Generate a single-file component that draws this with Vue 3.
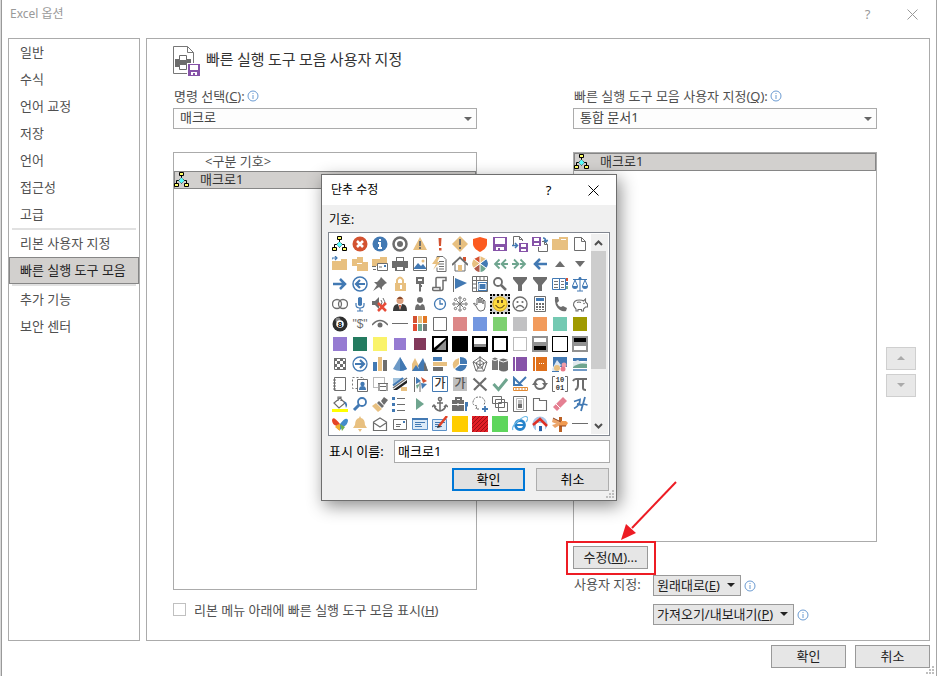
<template>
  <div class="options-window">
    <header class="title-bar">
      <h1>Excel 옵션</h1>
      <div class="title-actions">
        <button type="button" aria-label="도움말">?</button>
        <button type="button" aria-label="닫기">
          <svg width="11" height="11" viewBox="0 0 11 11"><path d="M.5.5l10 10M10.5.5l-10 10" stroke="currentColor" fill="none" /></svg>
        </button>
      </div>
    </header>

    <div class="window-body">
      <nav class="side-nav">
        <template v-for="item in navItems" :key="item.label">
          <hr v-if="item.divider">
          <a href="#" :class="{ active: item.label === activeNav }" @click.prevent="activeNav = item.label">{{ item.label }}</a>
        </template>
      </nav>

      <main class="panel">
        <div class="panel-heading">
          <svg width="28" height="31" viewBox="0 0 28 31" fill="none">
            <path d="M.5.5h14l6 6v21H.5z" fill="#fff" stroke="#777" />
            <path d="M14.500.5v6h6" stroke="#777" />
            <path d="M2 13h16v8H2z" fill="#6b6b6b" />
            <path d="M6.500 9.500h7v5h-7zM6.500 18.500h7v5h-7z" fill="#fff" stroke="#6b6b6b" />
            <path d="M14 17h14v14H14z" fill="#fff" />
            <path d="M15 18h12v12H15z" fill="#8653a8" />
            <path d="M17 19h8v5h-8zM18 26h6v3h-6z" fill="#fff" />
            <path d="M20 27h2v2h-2z" fill="#8653a8" />
          </svg>
          <h2>빠른 실행 도구 모음 사용자 지정</h2>
        </div>

        <div class="columns">
          <section class="column source">
            <div class="field-label">
              <label for="command-source">명령 선택(<u>C</u>):</label>
              <svg class="info" viewBox="0 0 12 12"><circle cx="6" cy="6" r="5" /><path d="M6 5v4M6 3v1" /></svg>
            </div>
            <div class="select-box">
              <select id="command-source"><option>매크로</option></select>
              <svg width="8" height="4" viewBox="0 0 8 4"><path d="M0 0h8L4 4z" fill="#666" /></svg>
            </div>
            <ul class="command-list">
              <li class="separator-item">&lt;구분 기호&gt;</li>
              <li class="selected"><svg viewBox="0 0 16 16" v-html="macroIcon"></svg><span>매크로1</span></li>
            </ul>
            <div class="check-row">
              <input id="below-ribbon" type="checkbox">
              <label for="below-ribbon">리본 메뉴 아래에 빠른 실행 도구 모음 표시(<u>H</u>)</label>
            </div>
          </section>

          <section class="column target">
            <div class="field-label">
              <label for="toolbar-target">빠른 실행 도구 모음 사용자 지정(<u>Q</u>):</label>
              <svg class="info" viewBox="0 0 12 12"><circle cx="6" cy="6" r="5" /><path d="M6 5v4M6 3v1" /></svg>
            </div>
            <div class="select-box">
              <select id="toolbar-target"><option>통합 문서1</option></select>
              <svg width="8" height="4" viewBox="0 0 8 4"><path d="M0 0h8L4 4z" fill="#666" /></svg>
            </div>
            <ul class="command-list">
              <li class="selected"><svg viewBox="0 0 16 16" v-html="macroIcon"></svg><span>매크로1</span></li>
            </ul>
            <div class="modify-row">
              <button type="button" class="btn"><span>수정(<u>M</u>)...</span></button>
              <!-- 강조 화살표 -->
              <svg class="arrow" width="60" height="64" viewBox="0 0 60 64">
                <path d="M56 3L12 49" stroke="#ed1c24" stroke-width="2" />
                <path d="M1 61L6 45l10 9z" fill="#ed1c24" />
              </svg>
            </div>
            <div class="custom-rows">
              <span class="custom-label">사용자 지정:</span>
              <div class="custom-item">
                <button type="button" class="btn drop"><span>원래대로(<u>E</u>)</span><svg viewBox="0 0 8 4"><path d="M0 0h8L4 4z" /></svg></button>
                <svg class="info" viewBox="0 0 12 12"><circle cx="6" cy="6" r="5" /><path d="M6 5v4M6 3v1" /></svg>
              </div>
              <div class="custom-item second">
                <button type="button" class="btn drop"><span>가져오기/내보내기(<u>P</u>)</span><svg viewBox="0 0 8 4"><path d="M0 0h8L4 4z" /></svg></button>
                <svg class="info" viewBox="0 0 12 12"><circle cx="6" cy="6" r="5" /><path d="M6 5v4M6 3v1" /></svg>
              </div>
            </div>
          </section>

          <div class="order-buttons">
            <button type="button" class="btn" disabled aria-label="위로"><svg width="8" height="4" viewBox="0 0 8 4"><path d="M0 4h8L4 0z" fill="#aaa" /></svg></button>
            <button type="button" class="btn" disabled aria-label="아래로"><svg width="8" height="4" viewBox="0 0 8 4"><path d="M0 0h8L4 4z" fill="#aaa" /></svg></button>
          </div>
        </div>
      </main>
    </div>

    <footer class="window-footer">
      <button type="button" class="btn">확인</button>
      <button type="button" class="btn">취소</button>
      <svg class="grip" viewBox="0 0 8 8"><path :d="gripPath" /></svg>
    </footer>

    <!-- 단추 수정 대화 상자 -->
    <div class="dialog" role="dialog" aria-labelledby="dialog-title">
      <header class="dialog-title">
        <h2 id="dialog-title">단추 수정</h2>
        <div class="title-actions">
          <button type="button" aria-label="도움말">?</button>
          <button type="button" aria-label="닫기">
            <svg width="11" height="11" viewBox="0 0 11 11"><path d="M.5.5l10 10M10.5.5l-10 10" stroke="currentColor" fill="none" /></svg>
          </button>
        </div>
      </header>
      <div class="dialog-body">
        <p class="symbol-label">기호:</p>
        <div class="symbol-box">
          <div class="symbol-grid">
            <button
              v-for="(icon, i) in icons"
              :key="i"
              type="button"
              :class="{ chosen: i === chosenIcon }"
              :aria-label="`기호 ${i + 1}`"
              @click="chosenIcon = i"
            >
              <svg width="16" height="16" viewBox="0 0 16 16" fill="none" v-html="icon"></svg>
            </button>
          </div>
          <div class="scrollbar">
            <svg width="15" height="17" viewBox="0 0 15 17"><path d="M4 11l3.500-3.500L11 11" /></svg>
            <div class="track"><div class="thumb"></div></div>
            <svg width="15" height="17" viewBox="0 0 15 17"><path d="M4 7l3.500 3.500L11 7" /></svg>
          </div>
        </div>
        <div class="name-row">
          <label for="display-name">표시 이름:</label>
          <input id="display-name" v-model="displayName" type="text">
        </div>
        <div class="dialog-buttons">
          <button type="button" class="btn primary">확인</button>
          <button type="button" class="btn">취소</button>
        </div>
      </div>
      <svg class="grip" viewBox="0 0 8 8"><path :d="gripPath" /></svg>
    </div>
  </div>
</template>

<script setup>
import { ref } from 'vue'

const navItems = [
  { label: '일반' },
  { label: '수식' },
  { label: '언어 교정' },
  { label: '저장' },
  { label: '언어' },
  { label: '접근성' },
  { label: '고급' },
  { label: '리본 사용자 지정', divider: true },
  { label: '빠른 실행 도구 모음' },
  { label: '추가 기능', divider: true },
  { label: '보안 센터' }
]
const activeNav = ref('빠른 실행 도구 모음')
const displayName = ref('매크로1')
const chosenIcon = ref(47)

const gripPath = 'M6 0h2v2H6zM3 3h2v2H3zM6 3h2v2H6zM0 6h2v2H0zM3 6h2v2H3zM6 6h2v2H6z'

const G = '#6d6d6d'
const B = '#4279b3'
const T = '#e8c080'
const R = '#d35230'
const P = '#8653a8'
const N = '#6fa58f'

// 채우기 / 선 도우미
const f = (d, c = G) => `<path d="${d}" fill="${c}"/>`
const s = (d, c = G, w = 1) => `<path d="${d}" stroke="${c}" stroke-width="${w}"/>`
const c = (x, y, r, color = G) => `<circle cx="${x}" cy="${y}" r="${r}" fill="${color}"/>`
const ring = (x, y, r, color = G, w = 1) => `<circle cx="${x}" cy="${y}" r="${r}" stroke="${color}" stroke-width="${w}"/>`
const t = (x, y, size, text, color = G, weight = 400, family = 'Liberation Sans, Noto Sans CJK KR, sans-serif') =>
  `<text x="${x}" y="${y}" font-family="${family}" font-size="${size}" font-weight="${weight}" fill="${color}" text-anchor="middle">${text}</text>`
const swatch = (color) => f('M1 1h14v14H1z', color)

const macroIcon =
  s('M7.500 4v2M2.500 11V8.500h3M12.500 11V8.500h-3', '#000') +
  '<path d="M7.500 5.500l3 3-3 3-3-3z" fill="#5ff" stroke="#222" stroke-dasharray="1 1"/>' +
  '<path d="M5.500.5h4v3h-4zM.5 11.500h4v3h-4zM10.500 11.500h4v3h-4z" fill="#ffff66" stroke="#000"/>'

const disk = f('M1 1h14v14H1z', P) + f('M3 2h10v6H3zM4 11h8v3H4z', '#fff') + f('M6 12h2v2H6z', P)
const miniDisk = (x, y) =>
  f(`M${x} ${y}h9v9h-9z`, P) + f(`M${x + 2} ${y + 1}h5v3h-5zM${x + 2} ${y + 6}h5v2h-5z`, '#fff')
const funnel = f('M1 1h14v2l-5 6v6H6V9L1 3z')
const cardLines = s('M3 6.500h10M3 8.500h6M3 10.500h7', B)

const icons = [
  // 1
  macroIcon,
  c(8, 8, 7.5, R) + s('M5 5l6 6M11 5l-6 6', '#fff', 2.5),
  c(8, 8, 7.5, B) + f('M7 3h2v2H7zM6 6h3v5h1v2H6v-2h1V8H6z', '#fff'),
  ring(8, 8, 6.5, G, 2.5) + c(8, 8, 3),
  f('M8 1l7 13H1z', T) + f('M7 5h2v5H7zM7 11h2v2H7z', G),
  f('M6.500 2h3L9 10H7zM7 12h2.500v2.500H7z', R),
  f('M8 0l8 8-8 8-8-8z', T) + f('M7 3h2v6H7zM7 11h2v2H7z', G),
  f('M8 1l7 2v5c0 3-3 6-7 8-4-2-7-5-7-8V3z', '#fc5a20'),
  disk,
  s('M1.500 9V.5h6l3 3V5M7.500.5v3h3') + miniDisk(7, 7) + s('M0 9.500h5M3 7l2.500 2.500L3 12', B, 1.5),
  miniDisk(0, 1) + s('M6.500 11v4.500h9v-7l-3-3H10M12.500 5.500v3h3') + s('M11 2q3 0 3 4M12 4l2 2 2-2', B, 1.5),
  f('M0 3h7V1h9v13H0z', T) + s('M9 3.500h5', '#fff'),
  '<path d="M2.500 1.500h7l4 4v9h-11zM9.500 1.500v4h4" fill="#fff" stroke="#6d6d6d"/>',
  // 2
  f('M0 5h9V3h6v11H0z', T) + s('M0 3.500V2h5M3 0l2 2-2 2', B, 1.2),
  f('M0 3h5V1h6v9H0z', T) + s('M5 7.500h10', '#fff') + f('M5 8h5V6h6v9H5z', T),
  f('M0 3h8V1h7v9H0z', T) + '<path d="M5.500 7.500h10v7h-10z" fill="#fff" stroke="#6d6d6d"/>' + s('M0 10.500h4M1 13.500h3M7 11h3') + f('M12 9h2v2h-2z', B),
  f('M4 1h8v4H4zM0 5h16v7h-3v-2H3v2H0zM3 10h10v5H3z') + f('M5 2h6v3H5zM5 11h6v3H5z', '#fff'),
  s('M1.500 1.500h13v13h-13z') + f('M2 12l4-5 3 3 2-2 3 4v1H2z', B) + c(11, 5, 1.5, T),
  s('M5 5.500V.5h6l3 3v12H5v-4M6 8h6M7 10.500h5M7 13h5M7 5.500h5') + f('M5 1L0 8h4L1 14l7-8H5l3-5z', T),
  '<path d="M3 7.500V15h10V7.500" fill="#fff" stroke="#6d6d6d"/>' + f('M11 1h3v4h-3z', R) + s('M0 9l8-7.500L16 9', G, 1.8) + f('M6 9h4v6H6z', T),
  f('M8 0l6 3-6 5z', T) + f('M8 0L2 3l6 5z', R) + f('M8 8L2 3q-4 5 0 9z', T) + f('M8 8l6-5q4 5 0 9z', B) + f('M8 8l6 4q-2 4-6 4z', N) + f('M8 8l-6 4q2 4 6 4z', '#b05a48') + s('M8 0v16M2 3l12 9M14 3L2 12', '#fff'),
  s('M7.500 3.500L3 8l4.500 4.500M14 3.500L9.500 8l4.500 4.500M3 8h5M10 8h6', N, 1.8),
  s('M8.500 3.500L13 8l-4.500 4.500M2 3.500L6.500 8 2 12.500M8 8h5M0 8h6', N, 1.8),
  s('M15 8H3M8 3L3 8l5 5', B, 2.5),
  f('M8 5l5 6H3z'),
  f('M3 5h10l-5 6z'),
  // 3
  s('M1 8h12M8 3l5 5-5 5', B, 2.5),
  ring(8, 8, 7, B, 1.5) + s('M13 8H4M8 4L4 8l4 4', B, 2.2),
  f('M9 1l6 6-2 1-3 3v3L7 11l-6 4 4-6-3-3h3l3-3z'),
  s('M5 7V4q3-5 6 0v3', T, 2) + f('M3 7h11v8H3z', T) + f('M8 9h2v4H8z', '#fff'),
  f('M4 1h8v7H9v1h1v2H9v4l-1 1-1-1V8H4z') + f('M6 3h4v2H6z', '#fff'),
  s('M4 11V2.500q0-1 1-1h9v3h-3v8q0 2-2 2H2q-2 0-1-3h7v3', G, 1.5),
  s('M1.500 0v16', G) + f('M3 2l12 5-12 6z', B),
  s('M.5.500h15v15H.5zM.5 4.500h15M4.500.5v15M8 0v4M12 0v4M0 8h4M0 12h4') + f('M6 6h9v9H6z', B) + s('M7 7.500h7v6H7z', '#fff'),
  ring(6, 6, 4, G, 1.8) + s('M9 9l5 5', G, 2.5),
  funnel,
  funnel,
  s('M.5 2.500h13v11H.5zM7.500 3v11', B) + s('M2 5.500h4M2 8.500h4M2 11.500h4M9 5.500h3M9 8.500h3M9 11.500h3', '#777') + f('M14 2h2v3h-2z', R) + f('M14 6h2v3h-2z', B) + f('M14 10h2v3h-2z', N),
  s('M8 1v14M5 15h6M1 3.500h14M3 4L.5 10M3 4l2.500 6M13 4l-2.500 6M13 4l2.500 6', B) + f('M0 10h6q0 3-3 3t-3-3zM10 10h6q0 3-3 3t-3-3z', B) + c(8, 2.5, 1.5, B),
  // 4
  ring(5, 8, 4.5, G, 1.3) + ring(11, 8, 4.5, G, 1.3),
  f('M6 2q2-2 4 0v7q-2 2-4 0z', B) + s('M4 7v2q0 3 4 3t4-3V7M8 12v3M5 15h6', B, 1.2),
  f('M0 5h3l4-4v12L3 9H0z') + s('M9 4q2 2 0 5M11 2q3 4 1 7') + s('M6 7l8 8M14 7l-8 8', '#e84b37', 2.5),
  f('M1 15q0-7 5-7h4q5 0 5 7z', '#3a3a3a') + f('M6 8h4l-2 6z', '#fff') + f('M7 9h2l-1 5z', R) + c(8, 4.5, 3.5, '#dda17f') + f('M5 3q3-5 6 0z', '#8b4b2c'),
  c(8, 4, 3) + f('M3 14q0-6 3-6l2 2 2-2q3 0 3 6z'),
  ring(8, 8, 5.5, B, 1.3) + s('M8 4v4h3', B, 1.3),
  s('M8 4v8M4 8h8M5 5l6 6M11 5l-6 6') + [[8, 2], [8, 14], [2, 8], [14, 8], [3.5, 3.5], [12.5, 3.5], [3.5, 12.5], [12.5, 12.5]].map(([x, y]) => ring(x, y, 1.2)).join(''),
  s('M4 10L1.500 8q0-2 2 0L5 9V3q1-2 2 0v4-5q1-2 2 0v5-4q1-2 2 0v5-3q1-2 2 0v6q0 4-4 4H8q-2 0-4-5z'),
  c(8, 8, 7.5, '#ffdc3e') + ring(8, 8, 7, '#d3a92a') + f('M5 4h2v3H5zM9 4h2v3H9z', '#6e5520') + s('M3.500 9q4.500 6 9 0', '#6e5520', 1.2),
  ring(8, 8, 7, G, 1.3) + c(5.5, 6, 1.1) + c(10.5, 6, 1.1) + s('M4 12q4-5 8 0', G, 1.3),
  s('M2.500.5h11v15h-11z') + f('M4 2h8v3H4z', B) + f('M4 7h2v2H4zM7 7h2v2H7zM10 7h2v2h-2zM4 10h2v2H4zM7 10h2v2H7zM10 10h2v2h-2zM4 13h2v1H4zM7 13h2v1H7zM10 13h2v1h-2z'),
  f('M3 1h3l1 4-2 2q1 3 4 4l2-1 4 2-1 3q-3 1-6-1Q2 10 3 1z'),
  s('M1.500 9q0-5 6-5 3 0 4 1l2-2v3l2 2v3h-2l-2 2v2h-2v-1.500H6V15H4v-2q-2-2-2.500-4zM5 6.500q2-1 4 0', G, 1.1) + c(12, 7.5, 0.8),
  // 5
  c(8, 8, 7.5, '#2d2d2d') + c(6, 4, 2.5, '#888') + c(8, 8, 3.8, '#fff') + t(8, 11, 8, '8', '#000', 700),
  t(8, 12, 12, '"$"'),
  s('M0 9q8-9 16 0', G, 1.5) + c(8, 9, 2.5),
  s('M0 7.500h16'),
  f('M1 0h4v7H1z', R) + f('M6 0h4v7H6z', T) + f('M11 0h4v7h-4z', '#e27724') + f('M1 8h4v7H1z', '#e24d32') + f('M6 8h4v7H6z', N) + f('M11 8h4v7h-4z', '#777'),
  s('M1.500 1.500h13v13h-13z'),
  swatch('#dc8787'),
  swatch('#7397e0'),
  swatch('#7dd070'),
  swatch('#c1c1c3'),
  swatch('#f29b5c'),
  swatch('#74c9b2'),
  swatch('#a09a00'),
  // 6
  swatch('#967bd2'),
  swatch('#247b60'),
  swatch('#faf36a'),
  f('M2 2h12v12H2z', '#967bd2'),
  f('M2 2h12v12H2z', '#82395b'),
  f('M0 0h16v16H0z', '#000') + f('M2 2h12L2 12z', '#fff') + f('M14 4v10H4z', '#8e8e8e'),
  f('M0 0h16v16H0z', '#000'),
  f('M0 0h16v16H0z', '#000') + f('M2 2h12v6H2z', '#fff') + f('M2 8h12v3H2z', '#8e8e8e'),
  f('M0 0h16v16H0z', '#000') + f('M2 2h12v12H2z', '#fff'),
  '<path d="M1.500 1.500h13v13h-13z" stroke="#777" stroke-dasharray="1 1"/>',
  f('M0 0h16v16H0z', '#919191') + f('M2 2h12v4H2z', '#fff') + f('M2 10h12v4H2z', '#000'),
  f('M0 0h16v16H0z', '#000') + f('M1 1h14v14H1z', '#fff'),
  f('M0 0h16v16H0z', '#919191') + f('M2 2h12v4H2z', '#000') + f('M2 10h12v4H2z', '#fff'),
  // 7
  s('M2.500 2.500h11v11h-11z') + f('M2 2h3v3H2zM8 2h3v3H8zM5 5h3v3H5zM11 5h3v3h-3zM2 8h3v3H2zM8 8h3v3H8zM5 11h3v3H5zM11 11h3v3h-3z'),
  ring(8, 8, 7, B, 1.3) + s('M3 8h9M8 4l4 4-4 4', B, 2.2),
  f('M1 6h4v9H1z', B) + f('M6 1h4v14H6z', T) + f('M11 4h4v11h-4z', G),
  f('M8 1l7 12q-7 4-14 0z', '#6c99c6') + f('M8 1l7 12q-3 2-7 2z', B),
  f('M0 8l3-6 4 8-3 5H0z', T) + f('M6 10l5-8 5 13H0l4-6 3 4z', B) + f('M12 9l1-3 3 9h-4z', G),
  f('M1 1h9v4H1z', B) + f('M1 6h14v4H1z', T) + f('M1 11h10v4H1z', G),
  f('M7 2v6l-5 5Q-2 5 7 2z', T) + f('M8 1q8 0 7 7H8z', B) + f('M8 9h7q-2 7-8 6-3 0-4-2z', B),
  s('M8 1l7 5-3 9H4L1 6zM8 4l4 3-2 5H6L4 7zM8 0v9l7-3M8 9l4 6M8 9l-4 6M8 9L1 6'),
  f('M0 3q3-3 6 0v11H0z', '#777') + f('M7 4q4-3 9 0v10q-4 3-9 0z', G) + s('M7 4.500q4 3 9 0M0 3.500q3 2 6 0', '#fff'),
  f('M1 1h14v14H1z', P) + s('M3.500 1v14', '#fff'),
  f('M1 1h14v14H1z', '#df701b') + s('M3.500 1v14', '#fff') + f('M7 7h1v1H7zM9 7h1v1H9zM11 7h1v1h-1z', '#fff'),
  f('M1 1h14v10H1z', B) + f('M0 13L5 4l4 5-4 7H1z', '#dce7f1') + c(5, 12, 3, T) + c(12, 9, 2.5, '#ef9da8') + c(11, 13, 2.5, '#ea7989') + s('M0 15.500h7', B),
  f('M1 2h14v3H1z', B) + f('M1 6l5-2 4 3 5-2v6H1z', '#e1e9ee') + f('M1 11q6-5 14-3v4H1z', N) + s('M1 14h14', B, 1.5),
  // 8
  s('M2.500 1.500h11v13h-11zM1 4h3M1 7h3M1 10h3M1 13h3', G),
  '<path d="M.5 1.500h11v11H.5z" stroke="#777" stroke-dasharray="2 2"/><path d="M5.500 3.500h10v12h-10z" fill="#fff" stroke="#6d6d6d"/>' + c(10.5, 8, 2.2, B) + f('M7 14q0-4 3.500-4t3.500 4z', B),
  '<path d="M1.500 1.500h11v10h-11z" stroke="#777" stroke-dasharray="1 1"/>' + f('M6 7h10v8H6z') + f('M8 8h6v2H8zM8 11h6v3H8z', '#fff') + s('M7 8v7M15 8v7', '#ddd'),
  f('M1 2h12L3 9H1z', '#a4c4de') + s('M1 9.500L11 2', B, 2) + s('M1 12L15 2', G, 1.5) + f('M1 14L15 4v3L5 14z', '#222') + f('M9 11h6v4H9z', T),
  s('M2.500 1v15M8 6v10') + f('M4 1l5 4-5 3z', B) + f('M9 1l6 4-4 2z', R) + f('M9 7l6 1-5 5z', B) + f('M4 9l4-1-3 5z', N),
  s('M.5.500h15v15H.5z', B) + t(8, 12, 12, '가', '#333', 500),
  f('M1 1h14v14H1z', '#c0c0c0') + t(8, 12, 12, '가', '#555', 500),
  s('M1.500 2.500l13 12M14 2L2 14', G, 2.2),
  s('M1.500 8l5 5.500L15 3', N, 3),
  s('M2 2v7h7zM14 1L7 8', B, 2) + s('M1.500 11.500h14v3h-14zM4 12v2M7 12v2M10 12v2M13 12v2', '#e28a35'),
  s('M3 8q0-5 5-5 4 0 5 4M13 8q0 5-5 5-4 0-5-4', G, 1.8) + f('M10 7h6l-3 4zM0 9h6L3 5z'),
  s('M3 .5H.5v15H3M13 .5h2.500v15H13') + t(8, 6, 7, '10', '#333', 700, 'Liberation Mono, monospace') + t(8, 14, 7, '01', '#333', 700, 'Liberation Mono, monospace'),
  s('M1 5q1-2 3-2h11M6 4v5q0 4-3 5M11 4v8q0 2 3 2', G, 2),
  // 9
  s('M2 7l6-5 5 5-6 5zM6 5V1h3v4', G, 1.2) + f('M12 5q5 2 2 7l-1-4z', B) + f('M0 13h16v3H0z', '#ffff00'),
  ring(10, 6, 4, B, 1.8) + s('M7 9l-5 5', B, 3),
  f('M9 5l3-4 4 3-4 5z', G) + f('M7 5l5 5-2 2-5-5z', G) + f('M4 7l6 6-4 3-6-6z', T),
  f('M0 1h3v3H0zM0 7h3v3H0zM0 13h3v3H0z', B) + s('M5 2.500h8M5 8.500h8M5 14.500h8'),
  f('M4 2l8 6-8 6z', N),
  ring(8, 3, 1.6, G, 1.5) + s('M8 5v10M5 7h6M2 9q1 5 6 6 5-1 6-6M0 11l2-2 2 2M12 11l2-2 2 2', G, 1.5),
  f('M0 4h12v11H0zM3 1h7v3H8V3H5v1H3z') + s('M0 8.500h12M6 7v3', '#fff') + f('M13 6h3v4l-1 1v4h-2z', B),
  '<path d="M7 13H4l1-3Q0 9 1 6q1-5 6-5t6 5l-1 3" stroke="#6d6d6d" stroke-dasharray="2 1"/>' + s('M13 10v6M10 13h6', B, 1.8),
  '<path d="M.5.500h9v7h-9zM3.500 3.500h9v8h-9zM6.500 6.500h9v9h-9z" fill="#fff" stroke="#6d6d6d"/>',
  s('M1.500.5h13v15h-13z') + s('M4.500 2.500h7v11h-7z', '#bbb') + f('M6 4h4v4H6z', '#bbb') + f('M6 8h4v4H6z', G),
  s('M1.500 14.500V2.500h6v2h7v10zM8 4.500h7', G, 1.1),
  f('M1 11L11 1l4 4L5 15z', '#e58092') + s('M4 8l4 4', '#fff'),
  s('M2 5.500l6-2q0 6-6 9M5 8l5 1M13 1L9 15M11.500 8l4 1', B, 1.8),
  // 10
  f('M8 8Q1-1 0 4q0 5 5 6 0 4 3 4z', '#e64424') + f('M8 8q6-8 8-4 0 5-5 7l-3 3z', '#428ccb') + f('M8 8q-3 0-5 3l5 4z', '#efb02f') + f('M8 8l2 7 3-4z', '#6fb04c'),
  f('M8 0l1 2q4 1 4 7l2 3H1l2-3q0-6 4-7zM6 13h4l-2 3z', T),
  s('M1.500 6L8 2l6.500 4v8.500h-13zM2 7l6 4 6-4', G, 1.2),
  s('M1.500 3.500h13v10h-13zM4 8.500h5M4 10.500h4') + f('M11 5h2v2h-2z', B),
  '<path d="M.5 2.500h15v11H.5z" fill="#dceaf7" stroke="#5b91c8"/>' + cardLines + s('M0 3h16', B, 2),
  '<path d="M.5 3.500h14v11H.5z" fill="#dceaf7" stroke="#5b91c8"/>' + cardLines + s('M15 0L7 10', '#e04227', 2.5) + f('M6 9l3 2-4 1z', '#333'),
  f('M0 0h16v16H0z', '#ffcd00'),
  f('M0 0h16v16H0z', '#e22027') + s('M0 4l4-4M0 8l8-8M0 12L12 0M0 16L16 0M4 16L16 4M8 16l8-8M12 16l4-4', '#9d1016'),
  f('M0 0h16v16H0z', '#5ed65c'),
  ring(8, 9, 4.5, '#2784cb', 2.8) + s('M4 9h9', '#2784cb', 2) + s('M1 14Q-1 11 6 5t9-4q2 1-1 5', '#70bce8', 1.2),
  c(8, 8, 7.5, '#a9c6e6') + f('M4 7h9v8H4z', '#fff') + s('M1 9l7-6 7 7', '#de3024', 2.5) + f('M7 10h3v5H7z', '#2762a8'),
  f('M7 1h3v15H7z', '#bb6124') + f('M8 5h6l2 2-2 3H8z', '#f19a50') + f('M1 2l8 4-2 3-7-3zM0 9l7-2 1 2-5 3z', '#eba469') + s('M1 2l8 4M8 10h6', '#8d4525'),
  s('M0 7.500h16')
]
</script>

<style>
body {
  margin: 0;
  background: #fff;
}
</style>

<style scoped>
* {
  box-sizing: border-box;
}

.options-window {
  position: relative;
  display: flex;
  flex-direction: column;
  min-height: 100vh;
  padding: 0 6px 0 7px;
  border-left: 1px solid #d9d9d9;
  border-right: 1px solid #a6a6a6;
  background: #fff;
  box-shadow: inset 1px 0 #999;
  color: #505050;
  font-family: "Noto Sans", "Noto Sans CJK KR", sans-serif;
  font-size: 13px;
  line-height: 18px;
}

button,
input,
select {
  font: inherit;
  color: inherit;
}

h1,
h2,
p,
ul {
  margin: 0;
  padding: 0;
  font-size: 13px;
  font-weight: 400;
}

.title-bar {
  display: flex;
  justify-content: space-between;
  height: 38px;
  padding: 5px 0 0 2px;
  color: #999;
}

.title-bar h1 {
  font-size: 12px;
}

.title-actions {
  display: flex;
  height: 18px;
}

.title-actions button {
  display: flex;
  align-items: center;
  justify-content: center;
  width: 45px;
  padding: 0;
  border: 0;
  background: none;
}

.title-bar .title-actions {
  margin-right: -5px;
}

.window-body {
  display: flex;
  flex: 1;
  gap: 6px;
}

.side-nav {
  display: flex;
  flex-direction: column;
  flex: 0 0 132px;
  border: 1px solid #ababab;
}

.side-nav a {
  height: 27px;
  padding: 0 10px;
  border: 1px solid transparent;
  line-height: 25px;
  color: inherit;
  text-decoration: none;
  white-space: nowrap;
}

.side-nav a.active {
  border-color: #868686;
  background: #d2d0ce;
  color: #222;
}

.side-nav hr {
  width: 124px;
  height: 2px;
  margin: 0 auto;
  border: 0;
  background: #e1e1e1;
}

.panel {
  display: flex;
  flex: 1;
  flex-direction: column;
  padding: 7px 13px 15px 26px;
  border: 1px solid #ababab;
}

.panel-heading {
  display: flex;
  gap: 5px;
  height: 30px;
  margin-bottom: 10px;
}

.panel-heading h2 {
  font-family: "Noto Sans CJK KR", sans-serif;
  font-size: 15px;
  line-height: 26px;
  color: #333;
}

.columns {
  display: grid;
  flex: 1;
  grid-template-columns: minmax(0, 352fr) minmax(0, 361fr) 30px;
}

.column {
  display: flex;
  flex-direction: column;
}

.source {
  margin-right: 48px;
}

.target {
  margin-right: 9px;
  margin-left: 48px;
}

.field-label {
  display: flex;
  align-items: center;
  gap: 2px;
  height: 22px;
  padding: 0 0 2px 1px;
}

.info {
  width: 12px;
  height: 12px;
  fill: none;
  stroke: #6b9bd2;
}

.select-box {
  display: grid;
  align-items: center;
  height: 21px;
  margin-bottom: 23px;
}

.select-box select,
.select-box svg {
  grid-area: 1 / 1;
}

.select-box svg {
  justify-self: end;
  margin-right: 5px;
  pointer-events: none;
}

.select-box select {
  width: 100%;
  height: 21px;
  padding: 0 6px 2px;
  border: 1px solid #ababab;
  border-radius: 0;
  background: #fdfdfd;
  color: #444;
  line-height: 17px;
  appearance: none;
}

.command-list {
  flex: 1;
  border: 1px solid #ababab;
  list-style: none;
}

.command-list li {
  display: flex;
  align-items: center;
  height: 18px;
  line-height: 16px;
}

.command-list .separator-item {
  padding: 0 0 2px 31px;
}

.command-list .selected {
  gap: 10px;
  border: 1px solid #868686;
  background: #d2d0ce;
  color: #333;
}

.command-list .selected span {
  padding-bottom: 2px;
}

.command-list .selected svg {
  width: 16px;
  height: 16px;
  margin-left: -1px;
  fill: none;
}

.check-row {
  display: flex;
  align-items: center;
  gap: 8px;
  height: 13px;
  margin: 13px 0 9px;
  white-space: nowrap;
}

.check-row input {
  width: 13px;
  height: 13px;
  margin: 0;
  border: 1px solid #c0c0c0;
  background: #fff;
  appearance: none;
}

.btn {
  display: flex;
  align-items: center;
  justify-content: center;
  width: 75px;
  height: 23px;
  padding: 0 0 2px;
  border: 1px solid #999;
  background: #e6e6e6;
  color: #222;
  white-space: nowrap;
}

.modify-row {
  position: relative;
  align-self: flex-start;
  margin: 4px 0 6px;
}

/* 빨간 강조 테두리 */
.modify-row::after {
  content: "";
  position: absolute;
  inset: -5px -8px -6px -7px;
  border: 2px solid #ed1c24;
  pointer-events: none;
}

.arrow {
  position: absolute;
  left: 47px;
  bottom: 26px;
  fill: none;
  pointer-events: none;
}

.custom-rows {
  display: grid;
  grid-template-columns: 80px auto;
  row-gap: 8px;
}

.custom-label {
  padding-left: 1px;
  line-height: 19px;
}

.custom-item {
  display: flex;
  align-items: center;
  gap: 3px;
}

.custom-item.second {
  grid-column: 2;
}

.btn.drop {
  gap: 7px;
  width: auto;
  height: 21px;
  padding: 0 5px 1px 3px;
}

.btn.drop svg {
  width: 8px;
  height: 4px;
  fill: #222;
}

.order-buttons {
  display: flex;
  flex-direction: column;
  justify-content: center;
  gap: 4px;
  padding-top: 33px;
}

.order-buttons .btn {
  width: 30px;
  border-color: #cfcfcf;
  background: #e8e8e8;
}

.window-footer {
  position: relative;
  display: flex;
  justify-content: flex-end;
  gap: 9px;
  height: 35px;
  padding-top: 4px;
}

.grip {
  position: absolute;
  right: 2px;
  bottom: 2px;
  width: 8px;
  height: 8px;
  fill: #bfbfbf;
}

.window-footer .grip {
  right: -4px;
}

.dialog {
  position: absolute;
  top: 174px;
  left: 320px;
  width: 296px;
  border: 1px solid #6e6e6e;
  background: #f0f0f0;
  color: #000;
  box-shadow: 3px 5px 16px rgba(0, 0, 0, 0.45);
}

.dialog-title {
  display: flex;
  justify-content: space-between;
  align-items: center;
  height: 30px;
  padding-left: 9px;
  background: #fff;
}

.dialog-title h2 {
  font-size: 12px;
}

.dialog-body {
  padding: 5px 6px 9px;
}

.symbol-label {
  height: 22px;
  padding-left: 1px;
  font-size: 12px;
  line-height: 20px;
}

.symbol-box {
  display: flex;
  justify-content: space-between;
  padding: 1px;
  border: 1px solid #828790;
  background: #fff;
}

.symbol-grid {
  display: grid;
  grid-template-columns: repeat(13, 20px);
  grid-auto-rows: 20px;
}

.symbol-grid button {
  display: flex;
  align-items: center;
  justify-content: center;
  padding: 0;
  border: 1px solid transparent;
  background: none;
}

.symbol-grid button.chosen {
  border: 2px dotted #000;
  background: #d0d0d0;
}

.symbol-grid svg {
  flex: none;
}

.scrollbar {
  display: flex;
  flex-direction: column;
  width: 17px;
  padding-right: 2px;
  background: #f0f0f0;
}

.scrollbar svg {
  fill: none;
  stroke: #505050;
  stroke-width: 2px;
}

.track {
  flex: 1;
}

.thumb {
  height: 71%;
  background: #cdcdcd;
}

.name-row {
  display: flex;
  align-items: center;
  justify-content: space-between;
  margin: 4px 0 5px;
  padding-left: 1px;
}

.name-row label {
  padding-bottom: 2px;
}

.name-row input {
  width: 216px;
  height: 23px;
  padding: 0 3px 3px;
  border: 1px solid #ababab;
  background: #fff;
}

.dialog-buttons {
  display: flex;
  justify-content: flex-end;
  gap: 11px;
  padding-right: 1px;
}

.dialog-buttons .btn {
  width: 73px;
  border-color: #adadad;
  background: #e1e1e1;
  color: #000;
}

.dialog-buttons .btn.primary {
  border: 2px solid #0078d7;
}
</style>
